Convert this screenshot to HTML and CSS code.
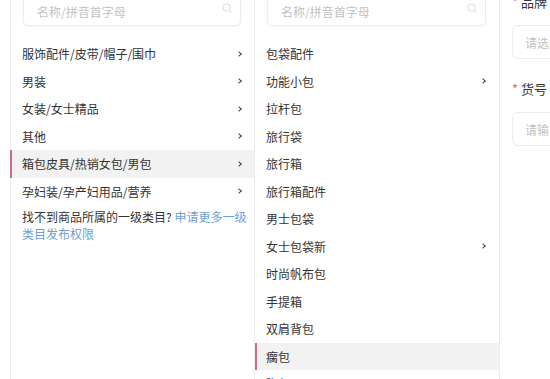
FILE: index.html
```html
<!DOCTYPE html>
<html lang="zh-CN">

<head>
    <meta charset="UTF-8">
    <meta name="viewport" content="width=device-width, initial-scale=1.0">
    <title>选择类目</title>
    <link rel="stylesheet" href="styles.css">
</head>

<body>

    <div class="page">
        <div class="cat-panel">
            <div class="col col-first">
                <div class="search">
                    <span class="placeholder">名称/拼音首字母</span>
                    <svg class="search-icon" width="10" height="10" viewBox="0 0 10 10"><circle cx="4.5" cy="4.5" r="3.5" fill="none" stroke="#e2e2e2" stroke-width="1.2"/><path d="M7 7l2.5 2.5" stroke="#e2e2e2" stroke-width="1.2"/></svg>
                </div>
                <ul class="cat-list">
                    <li class="cat-item"><span>服饰配件/皮带/帽子/围巾</span><i class="arrow"></i></li>
                    <li class="cat-item"><span>男装</span><i class="arrow"></i></li>
                    <li class="cat-item"><span>女装/女士精品</span><i class="arrow"></i></li>
                    <li class="cat-item"><span>其他</span><i class="arrow"></i></li>
                    <li class="cat-item active"><span>箱包皮具/热销女包/男包</span><i class="arrow"></i></li>
                    <li class="cat-item"><span>孕妇装/孕产妇用品/营养</span><i class="arrow"></i></li>
                </ul>
                <p class="cat-tip">找不到商品所属的一级类目? <a href="#">申请更多一级类目发布权限</a></p>
            </div>

            <div class="col col-second">
                <div class="search">
                    <span class="placeholder">名称/拼音首字母</span>
                    <svg class="search-icon" width="10" height="10" viewBox="0 0 10 10"><circle cx="4.5" cy="4.5" r="3.5" fill="none" stroke="#e2e2e2" stroke-width="1.2"/><path d="M7 7l2.5 2.5" stroke="#e2e2e2" stroke-width="1.2"/></svg>
                </div>
                <ul class="cat-list">
                    <li class="cat-item"><span>包袋配件</span></li>
                    <li class="cat-item"><span>功能小包</span><i class="arrow"></i></li>
                    <li class="cat-item"><span>拉杆包</span></li>
                    <li class="cat-item"><span>旅行袋</span></li>
                    <li class="cat-item"><span>旅行箱</span></li>
                    <li class="cat-item"><span>旅行箱配件</span></li>
                    <li class="cat-item"><span>男士包袋</span></li>
                    <li class="cat-item"><span>女士包袋新</span><i class="arrow"></i></li>
                    <li class="cat-item"><span>时尚帆布包</span></li>
                    <li class="cat-item"><span>手提箱</span></li>
                    <li class="cat-item"><span>双肩背包</span></li>
                    <li class="cat-item active"><span>瘸包</span></li>
                    <li class="cat-item"><span>胸包</span></li>
                </ul>
            </div>
        </div>

        <div class="form">
            <div class="form-item">
                <label class="form-label"><em>*</em>品牌</label>
                <div class="input"><span class="placeholder">请选择品牌</span></div>
            </div>
            <div class="form-item">
                <label class="form-label"><em>*</em>货号</label>
                <div class="input"><span class="placeholder">请输入货号</span></div>
            </div>
        </div>
    </div>

</body>

</html>
```

FILE: styles.css
```css
body {
    margin: 0;
    font-family: "Noto Sans CJK SC", "Noto Sans", sans-serif;
    font-size: 12px;
    color: #333;
    background-color: #fff;
    overflow: hidden;
}

ul {
    list-style: none;
    margin: 0;
    padding: 0;
}

.page {
    display: flex;
    margin-top: -16px;
    padding-left: 10px;
}

.cat-panel {
    display: flex;
}

.col {
    box-sizing: border-box;
    width: 245px;
    min-height: 420px;
    padding-top: 12px;
    border-right: 1px solid #ececec;
}

.col-first {
    border-left: 1px solid #ececec;
}

.search {
    display: flex;
    align-items: center;
    justify-content: space-between;
    box-sizing: border-box;
    height: 30px;
    margin: 0 13px 14px 12px;
    padding: 0 8px 0 13px;
    border: 1px solid #ececec;
    border-radius: 5px;
    box-shadow: 0 1px 3px rgba(0, 0, 0, 0.04);
}

.search-icon {
    margin-top: -6px;
}

.placeholder {
    color: #c2c2c2;
}

.cat-item {
    display: flex;
    align-items: center;
    justify-content: space-between;
    box-sizing: border-box;
    height: 27.5px;
    padding: 0 13px 0 11px;
}

.col-second .cat-item {
    padding: 0 14px 0 11px;
}

.cat-item.active {
    background-color: #f2f2f2;
    border-left: 2px solid #c66d8e;
    padding-left: 10px;
    margin-left: -1px;
}

.col-second .cat-item.active {
    margin-left: 0;
    padding-left: 9px;
}

.arrow {
    width: 3px;
    height: 3px;
    border-top: 1.2px solid #444;
    border-right: 1.2px solid #444;
    transform: rotate(45deg);
}

.cat-tip {
    margin: 3px 4px 0 11px;
    line-height: 17px;
}

.cat-tip a {
    color: #6e9fd2;
    text-decoration: none;
}

.form {
    flex: 1;
    padding: 8px 0 0 12px;
    overflow: hidden;
}

.form-item {
    margin-bottom: 20px;
}

.form-label {
    display: block;
    height: 20px;
    line-height: 20px;
    margin-bottom: 13px;
    font-size: 13px;
    color: #333;
}

.form-label em {
    font-style: normal;
    color: #f06a4a;
    margin-right: 3px;
}

.input {
    display: flex;
    align-items: center;
    box-sizing: border-box;
    width: 300px;
    height: 34px;
    padding-left: 12px;
    border: 1px solid #ececec;
    border-radius: 6px;
}
```
